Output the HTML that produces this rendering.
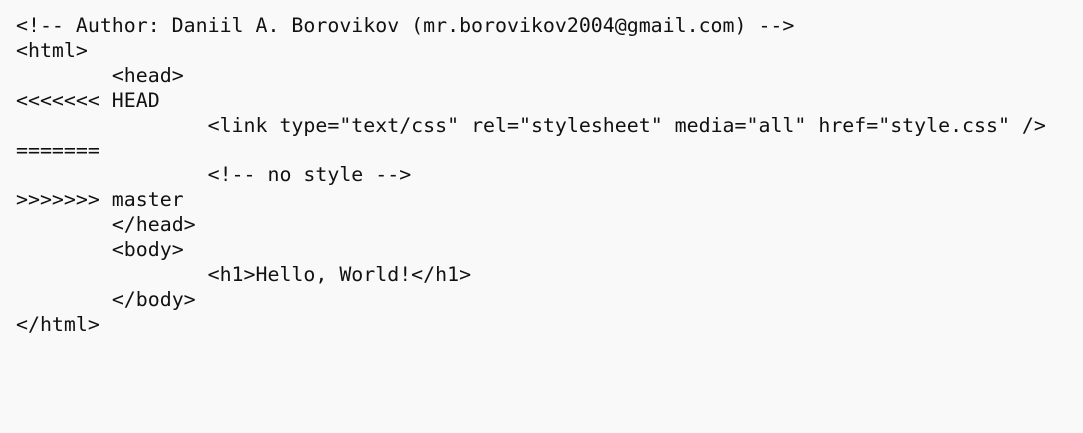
<!DOCTYPE html>
<html><head><style>
html,body{margin:0;background:#f9f9f9;}
pre{margin:0;padding:14px 0 0 16px;font-family:"DejaVu Sans Mono","Liberation Mono",monospace;font-size:19.9px;line-height:24.9px;color:#111;tab-size:8;}
</style></head><body><pre>&lt;!-- Author: Daniil A. Borovikov (mr.borovikov2004@gmail.com) --&gt;
&lt;html&gt;
	&lt;head&gt;
&lt;&lt;&lt;&lt;&lt;&lt;&lt; HEAD
		&lt;link type="text/css" rel="stylesheet" media="all" href="style.css" /&gt;
=======
		&lt;!-- no style --&gt;
&gt;&gt;&gt;&gt;&gt;&gt;&gt; master
	&lt;/head&gt;
	&lt;body&gt;
		&lt;h1&gt;Hello, World!&lt;/h1&gt;
	&lt;/body&gt;
&lt;/html&gt;
</pre></body></html>
